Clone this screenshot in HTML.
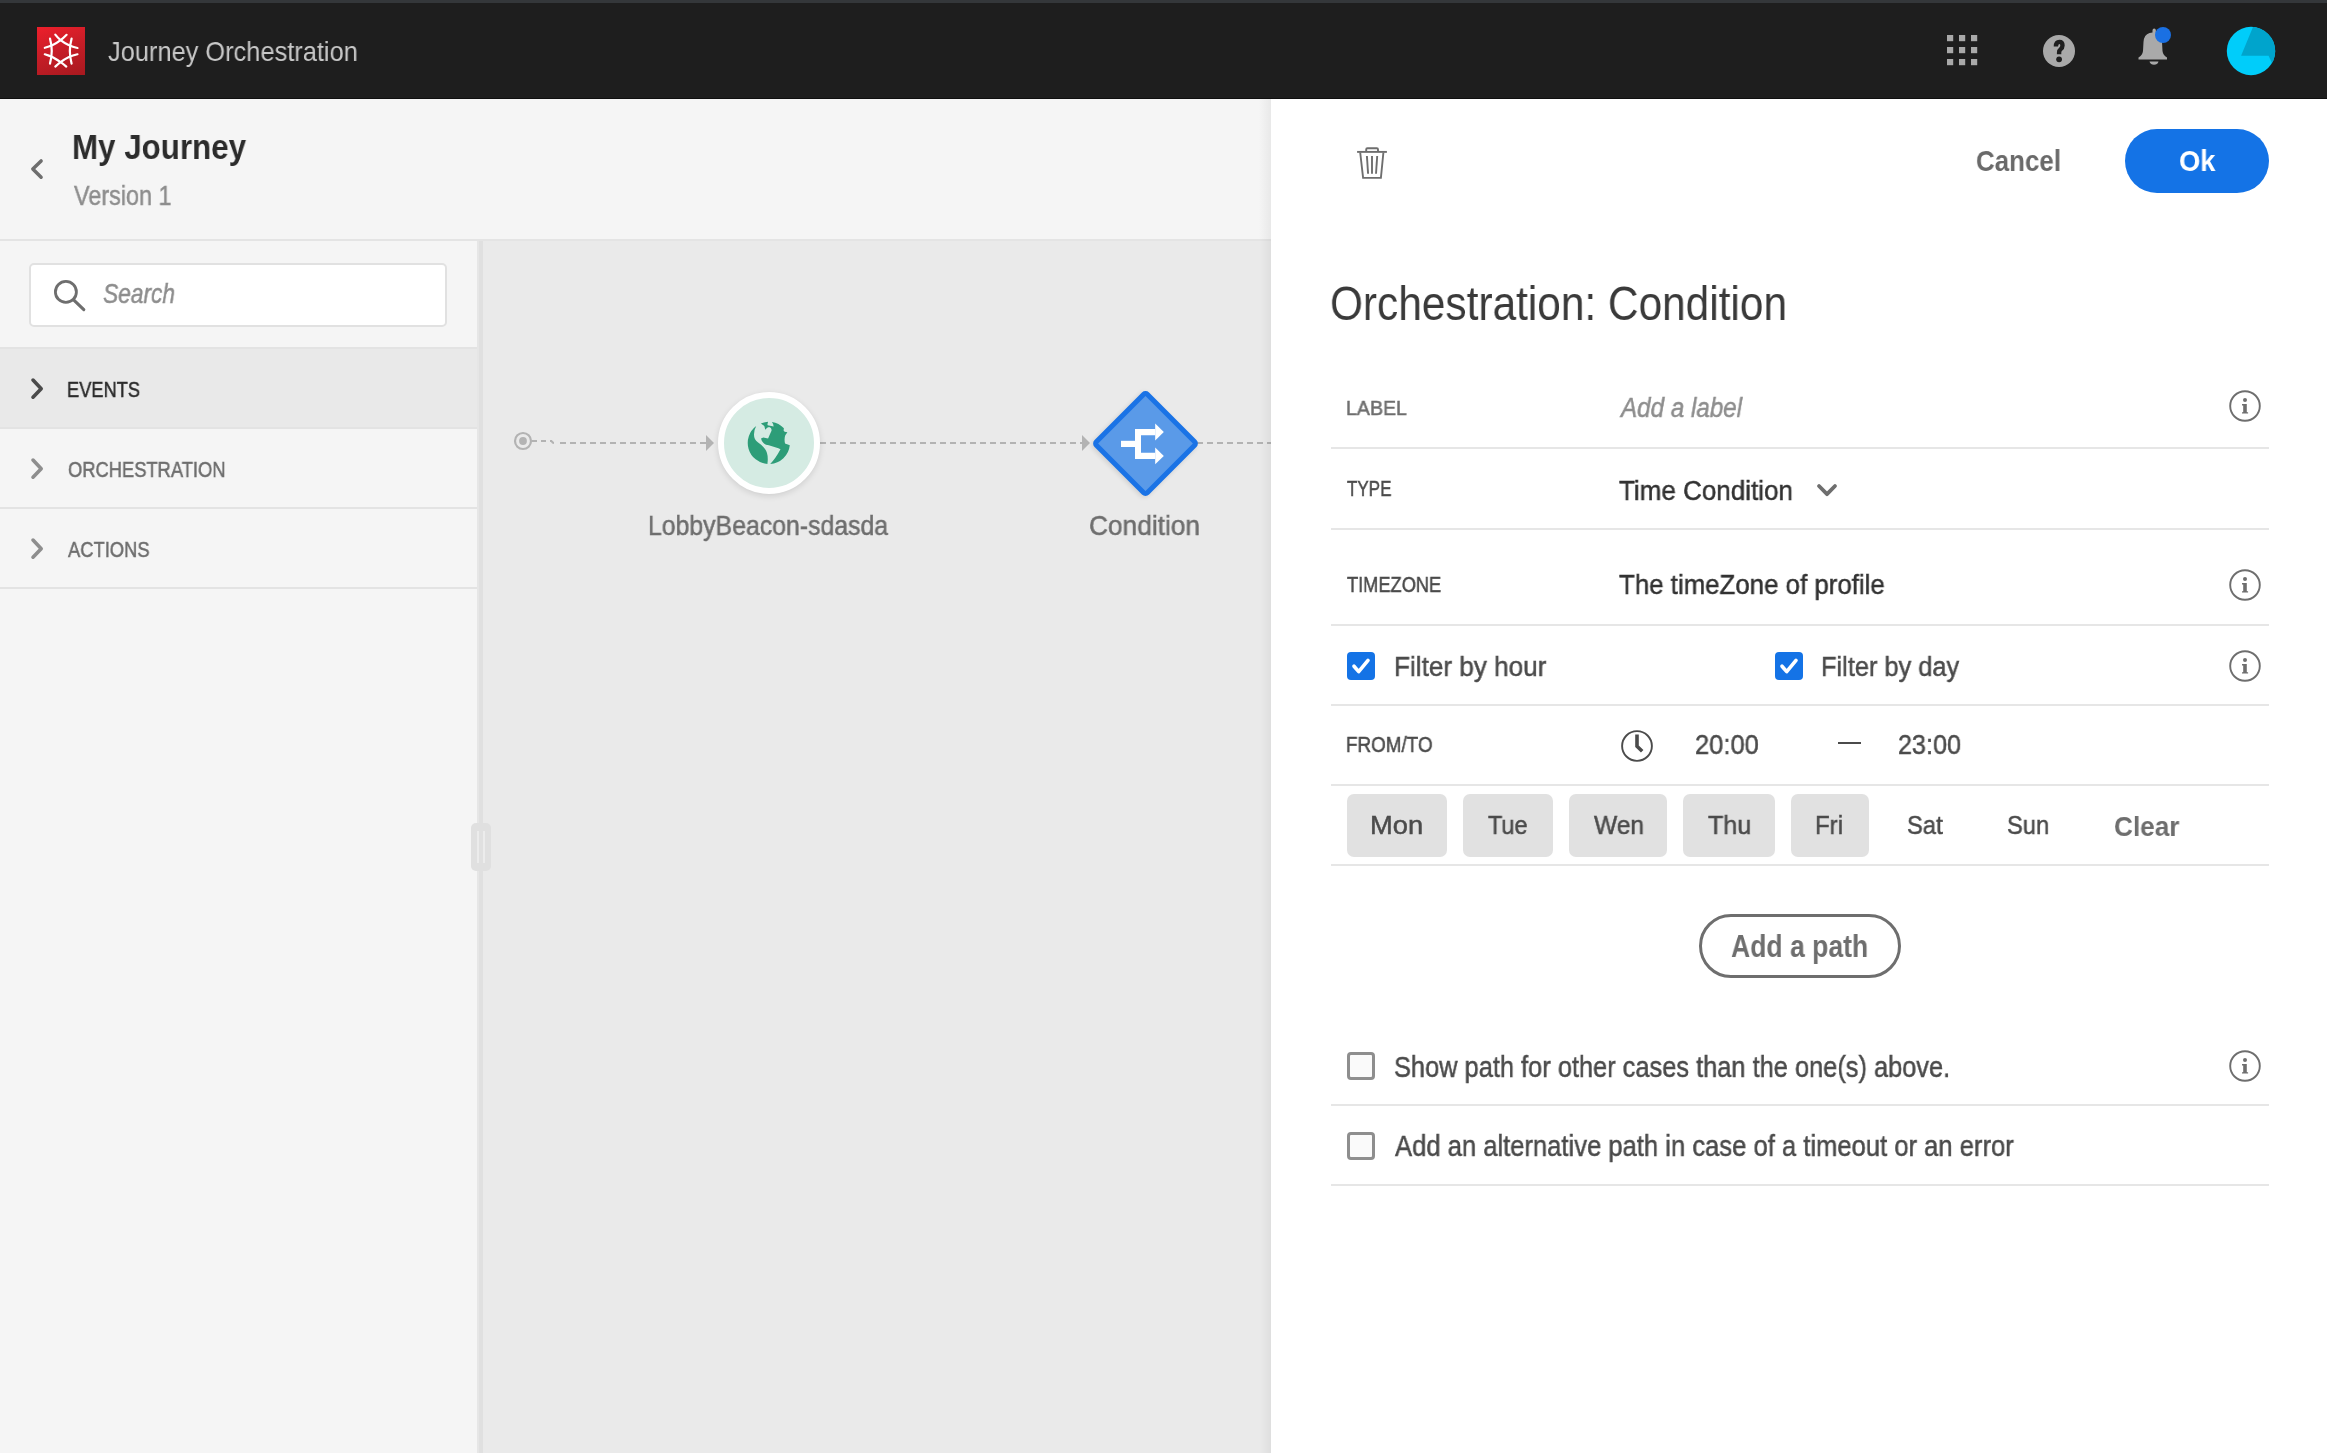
<!DOCTYPE html>
<html><head><meta charset="utf-8"><title>Journey Orchestration</title>
<style>
html,body{margin:0;padding:0;}
body{width:2327px;height:1453px;overflow:hidden;position:relative;background:#fff;font-family:"Liberation Sans",sans-serif;}
.a{position:absolute;}
.t{position:absolute;white-space:nowrap;font-family:"Liberation Sans",sans-serif;will-change:transform;}
#topstrip{left:0;top:0;width:2327px;height:3px;background:#34373a;}
#hdr{left:0;top:3px;width:2327px;height:95px;background:#1e1e1e;}
#hdrline{left:0;top:98px;width:2327px;height:1px;background:#0f0f0f;}
#logo{left:37px;top:27px;width:48px;height:48px;background:linear-gradient(160deg,#ee1f2b 0%,#c51d27 50%,#a8191f 100%);}
#jhead{left:0;top:99px;width:1271px;height:140px;background:#f5f5f5;}
#jline{left:0;top:239px;width:1271px;height:2px;background:#e4e4e4;}
#lpanel{left:0;top:241px;width:477px;height:1212px;background:#f5f5f5;}
#divider{left:477px;top:241px;width:6px;height:1212px;background:#e6e6e6;}
#dividerc{left:479px;top:241px;width:4px;height:1212px;background:#e0e0e0;}
#handle{left:471px;top:823px;width:20px;height:48px;background:#e0e0e0;border-radius:5px;}
#canvas{left:483px;top:241px;width:788px;height:1212px;background:#eaeaea;}
#rshadow{left:1259px;top:99px;width:12px;height:1354px;background:linear-gradient(90deg,rgba(0,0,0,0),rgba(0,0,0,0.05));}
#rpanel{left:1271px;top:99px;width:1056px;height:1354px;background:#ffffff;}
.search{left:29px;top:263px;width:414px;height:60px;background:#fff;border:2px solid #e1e1e1;border-radius:5px;}
.row{left:0;width:477px;}
.hl{height:2px;background:#e6e6e6;}
.daybtn{background:#e1e1e1;border-radius:7px;height:63px;top:794px;}
.cb{width:28px;height:28px;border-radius:4px;box-sizing:border-box;}
.cbon{background:#1473e6;}
.cboff{border:3.5px solid #8e8e8e;background:#fafafa;}

</style></head><body>
<div class="a" id="topstrip"></div>
<div class="a" id="hdr"></div>
<div class="a" id="hdrline"></div>
<div class="a" id="logo">
<svg width="48" height="48" viewBox="0 0 48 48" style="position:absolute;left:0;top:0">
<g fill="none" stroke="#fff" stroke-width="2.2" stroke-linecap="round">
<path d="M18.3 7.6 Q21 11 23.6 13.2 Q31 19 40.5 21"/>
<path d="M29.6 7.8 Q26.5 11 23.6 13.2 Q16 19 7.8 20.8"/>
<path d="M18.3 39.6 Q21 37 23.6 35.1 Q31 29.5 40.5 27.3"/>
<path d="M29.3 39.6 Q26.5 37 23.6 35.1 Q16 29.5 7.8 27.3"/>
<path d="M13 11.6 Q16.5 24 13 36.6"/>
<path d="M34.6 11.6 Q31.1 24 34.6 36.6"/>
</g>
</svg>
</div>
<!-- header right icons -->
<svg class="a" style="left:1940px;top:28px" width="44" height="44" viewBox="0 0 44 44">
<g fill="#a9a9a9">
<rect x="7" y="7" width="6.2" height="6.2"/><rect x="19" y="7" width="6.2" height="6.2"/><rect x="31" y="7" width="6.2" height="6.2"/>
<rect x="7" y="19" width="6.2" height="6.2"/><rect x="19" y="19" width="6.2" height="6.2"/><rect x="31" y="19" width="6.2" height="6.2"/>
<rect x="7" y="31" width="6.2" height="6.2"/><rect x="19" y="31" width="6.2" height="6.2"/><rect x="31" y="31" width="6.2" height="6.2"/>
</g>
</svg>
<svg class="a" style="left:2039px;top:31px" width="40" height="40" viewBox="0 0 40 40">
<circle cx="20" cy="20" r="16" fill="#a9a9a9"/>
<path d="M16.9 15.6 Q16.9 10.9 20.4 10.9 Q23.5 10.9 23.5 14.6 Q23.5 16.9 21.6 18.2 Q20.1 19.2 20.1 21.8 L20.1 23.2" fill="none" stroke="#1e1e1e" stroke-width="4.4" stroke-linecap="butt"/>
<circle cx="20.1" cy="28.3" r="2.9" fill="#1e1e1e"/>
</svg>
<svg class="a" style="left:2133px;top:22px" width="48" height="48" viewBox="0 0 48 48">
<path d="M19.5 8.5 Q19.5 6.5 21.2 6.5 Q22.9 6.5 22.9 8.5 L22.9 11 Q28.5 12.5 29 20 L29.5 29 Q30 33 34 35.5 L34 37.5 L5.5 37.5 L5.5 35.5 Q9.5 33 10 29 L10.5 20 Q11 12.5 16.5 11 L19.5 10.5 Z" fill="#a9a9a9"/>
<path d="M16.5 39.5 L25.5 39.5 Q24.5 42.8 21 42.8 Q17.5 42.8 16.5 39.5 Z" fill="#a9a9a9"/>
<circle cx="30" cy="13" r="8" fill="#1a70e3"/>
</svg>
<svg class="a" style="left:2225px;top:25px" width="52" height="52" viewBox="0 0 52 52">
<defs><clipPath id="avc"><circle cx="26" cy="26" r="24.2"/></clipPath></defs>
<circle cx="26" cy="26" r="24.2" fill="#00cdfa"/>
<path clip-path="url(#avc)" d="M28.8 0 L16.1 30.7 L43.6 30.7 L52.3 50 L60 50 L60 0 Z" fill="#00a4cc"/>
</svg>

<!-- journey header -->
<div class="a" id="jhead"></div>
<div class="a" id="jline"></div>
<svg class="a" style="left:26px;top:155px" width="24" height="28" viewBox="0 0 24 28">
<path d="M15.1 5.9 L6.8 13.9 L15.1 22.2" fill="none" stroke="#6e6e6e" stroke-width="3.5" stroke-linecap="round" stroke-linejoin="round"/>
</svg>

<!-- left panel -->
<div class="a" id="lpanel"></div>
<div class="a search"></div>
<svg class="a" style="left:50px;top:276px" width="40" height="40" viewBox="0 0 40 40">
<circle cx="15.9" cy="15.9" r="10.5" fill="none" stroke="#6e6e6e" stroke-width="2.8"/>
<path d="M23.6 23.8 L33.8 33.6" stroke="#6e6e6e" stroke-width="3.1" stroke-linecap="round"/>
</svg>
<div class="a row hl" style="top:347px;background:#e3e3e3"></div>
<div class="a row" style="top:349px;height:78px;background:#e9e9e9"></div>
<div class="a row hl" style="top:427px;background:#e3e3e3"></div>
<div class="a row hl" style="top:507px;background:#e3e3e3"></div>
<div class="a row hl" style="top:587px;background:#e3e3e3"></div>
<svg class="a" style="left:26px;top:374px" width="24" height="30" viewBox="0 0 24 30">
<path d="M7 6.1 L15.2 14.7 L7 23.2" fill="none" stroke="#4b4b4b" stroke-width="3.6" stroke-linecap="round" stroke-linejoin="round"/>
</svg>
<svg class="a" style="left:26px;top:454px" width="24" height="30" viewBox="0 0 24 30">
<path d="M7 6.1 L15.2 14.7 L7 23.2" fill="none" stroke="#8e8e8e" stroke-width="3.6" stroke-linecap="round" stroke-linejoin="round"/>
</svg>
<svg class="a" style="left:26px;top:534px" width="24" height="30" viewBox="0 0 24 30">
<path d="M7 6.1 L15.2 14.7 L7 23.2" fill="none" stroke="#8e8e8e" stroke-width="3.6" stroke-linecap="round" stroke-linejoin="round"/>
</svg>
<div class="a" id="divider"></div>
<div class="a" id="dividerc"></div>

<!-- canvas -->
<div class="a" id="canvas"></div>
<div class="a" id="handle"></div>
<div class="a" style="left:477px;top:831px;width:2px;height:32px;background:#ececec"></div>
<div class="a" style="left:483px;top:831px;width:2px;height:32px;background:#ececec"></div>
<svg class="a" style="left:483px;top:380px" width="788" height="130" viewBox="483 380 788 130">
<circle cx="523" cy="441" r="8" fill="none" stroke="#b3b3b3" stroke-width="2.2"/>
<circle cx="523" cy="441" r="3.9" fill="#b3b3b3"/>
<path d="M532 441 L552 441" stroke="#b3b3b3" stroke-width="2" stroke-dasharray="5 4"/>
<path d="M551.5 441 Q552.5 443 554 443" fill="none" stroke="#b3b3b3" stroke-width="2"/>
<path d="M560 443 L706 443" stroke="#b3b3b3" stroke-width="2" stroke-dasharray="6 4"/>
<path d="M706 435 L714 443 L706 451 Z" fill="#b3b3b3"/>
<path d="M820 443 L1082 443" stroke="#b3b3b3" stroke-width="2" stroke-dasharray="6 4"/>
<path d="M1082 435 L1090 443 L1082 451 Z" fill="#b3b3b3"/>
<path d="M1197 443 L1271 443" stroke="#b3b3b3" stroke-width="2" stroke-dasharray="6 4"/>
</svg>
<div class="a" style="left:718px;top:392px;width:90px;height:90px;border:6px solid #fff;border-radius:50%;background:#d5ebe3;box-shadow:0 2px 6px rgba(0,0,0,0.12)"></div>
<svg class="a" style="left:744px;top:418px" width="50" height="50" viewBox="0 0 50 50">
<path fill="#2d9d78" d="M12.2 8.1 A21 21 0 0 0 23.4 45.9 Q24.8 36 21 31 Q18 27 13.8 24.2 Q9.8 21.5 10 16.2 Q10.3 11.5 12.2 8.1 Z"/>
<path fill="#2d9d78" d="M17 20.6 L19.3 19.6 L24.1 20.6 Q25.5 17 27.5 12.7 Q28 9.6 25.1 9.1 Q23 9.2 21.3 11.7 L20.3 7.9 L16.9 5.5 Q20.5 4 24.1 3.8 L23.4 6.2 L23.7 7.2 L29.6 8.4 L29.2 6.2 L27.9 4.1 A21 21 0 0 1 39.9 10.3 L39.6 12.4 L40.6 13.8 L43.4 14.3 L41.3 17.2 Q40 20.5 41 25.5 L45.8 27.2 A21 21 0 0 1 26.2 45.9 Q31 41.5 36.5 31.3 L34.4 30.3 L24.8 27.2 L22 26.8 Q20 26 19.3 24.8 Q17.5 23 17 20.6 Z"/>
</svg>
<div class="a" style="left:1106.5px;top:404.5px;width:77px;height:77px;box-sizing:border-box;background:#5a9ae8;border:5.5px solid #1a73e6;border-radius:5px;transform:rotate(45deg);box-shadow:0 2px 5px rgba(0,0,0,0.12)"></div>
<svg class="a" style="left:1115px;top:418px" width="56" height="50" viewBox="1115 418 56 50">
<g fill="#fff">
<rect x="1121" y="440.8" width="15" height="6.2"/>
<path d="M1135 429 L1155.2 429 L1155.2 435.2 L1141 435.2 L1141 452.8 L1155.2 452.8 L1155.2 459 L1135 459 Z"/>
<path d="M1155.2 423.6 L1163.8 432 L1155.2 440.4 Z"/>
<path d="M1155.2 447.5 L1163.8 455.9 L1155.2 464.3 Z"/>
</g>
</svg>

<!-- right panel -->
<div class="a" id="rshadow"></div>
<div class="a" id="rpanel"></div>
<svg class="a" style="left:1352px;top:142px" width="40" height="42" viewBox="0 0 40 42">
<g fill="none" stroke="#6e6e6e" stroke-width="1.9">
<path d="M5.1 9.9 L34.9 9.9"/>
<path d="M14.2 9.9 L14.2 7.4 Q14.2 6.2 15.4 6.2 L24.8 6.2 Q26 6.2 26 7.4 L26 9.9"/>
<path d="M8.2 10.5 L11.1 35.9 L28.9 35.9 L31.4 10.5"/>
<path d="M14.9 14 L16.1 31.8"/><path d="M20 14 L20 31.8"/><path d="M25.2 14 L24 31.8"/>
</g>
</svg>
<div class="a" style="left:2125px;top:129px;width:144px;height:64px;border-radius:32px;background:#1473e6"></div>

<div class="a hl" style="left:1331px;top:447px;width:938px"></div>
<div class="a hl" style="left:1331px;top:528px;width:938px"></div>
<div class="a hl" style="left:1331px;top:624px;width:938px"></div>
<div class="a hl" style="left:1331px;top:704px;width:938px"></div>
<div class="a hl" style="left:1331px;top:784px;width:938px"></div>
<div class="a hl" style="left:1331px;top:864px;width:938px"></div>
<div class="a hl" style="left:1331px;top:1104px;width:938px"></div>
<div class="a hl" style="left:1331px;top:1184px;width:938px"></div>

<svg class="a" style="left:2225px;top:386px" width="40" height="40" viewBox="0 0 40 40">
<circle cx="20" cy="20" r="14.8" fill="none" stroke="#6e6e6e" stroke-width="1.9"/>
<circle cx="20" cy="14" r="2" fill="#6e6e6e"/>
<path d="M17 18.1 L21.8 18.1 L21.8 26.2 L23.1 26.2 L23.1 27.6 L17 27.6 L17 26.2 L18.2 26.2 L18.2 19.5 L17 19.5 Z" fill="#6e6e6e"/>
</svg>
<svg class="a" style="left:2225px;top:565px" width="40" height="40" viewBox="0 0 40 40">
<circle cx="20" cy="20" r="14.8" fill="none" stroke="#6e6e6e" stroke-width="1.9"/>
<circle cx="20" cy="14" r="2" fill="#6e6e6e"/>
<path d="M17 18.1 L21.8 18.1 L21.8 26.2 L23.1 26.2 L23.1 27.6 L17 27.6 L17 26.2 L18.2 26.2 L18.2 19.5 L17 19.5 Z" fill="#6e6e6e"/>
</svg>
<svg class="a" style="left:2225px;top:646px" width="40" height="40" viewBox="0 0 40 40">
<circle cx="20" cy="20" r="14.8" fill="none" stroke="#6e6e6e" stroke-width="1.9"/>
<circle cx="20" cy="14" r="2" fill="#6e6e6e"/>
<path d="M17 18.1 L21.8 18.1 L21.8 26.2 L23.1 26.2 L23.1 27.6 L17 27.6 L17 26.2 L18.2 26.2 L18.2 19.5 L17 19.5 Z" fill="#6e6e6e"/>
</svg>
<svg class="a" style="left:2225px;top:1046px" width="40" height="40" viewBox="0 0 40 40">
<circle cx="20" cy="20" r="14.8" fill="none" stroke="#6e6e6e" stroke-width="1.9"/>
<circle cx="20" cy="14" r="2" fill="#6e6e6e"/>
<path d="M17 18.1 L21.8 18.1 L21.8 26.2 L23.1 26.2 L23.1 27.6 L17 27.6 L17 26.2 L18.2 26.2 L18.2 19.5 L17 19.5 Z" fill="#6e6e6e"/>
</svg>

<svg class="a" style="left:1812px;top:478px" width="30" height="24" viewBox="0 0 30 24">
<path d="M7 8 L15 16.2 L23 8" fill="none" stroke="#6e6e6e" stroke-width="3.8" stroke-linecap="round" stroke-linejoin="round"/>
</svg>

<div class="a cb cbon" style="left:1347px;top:652px"></div>
<svg class="a" style="left:1347px;top:652px" width="28" height="28" viewBox="0 0 28 28">
<path d="M7 14.2 L11.7 19.6 L21 8.3" fill="none" stroke="#fff" stroke-width="3.6" stroke-linecap="round" stroke-linejoin="round"/>
</svg>
<div class="a cb cbon" style="left:1775px;top:652px"></div>
<svg class="a" style="left:1775px;top:652px" width="28" height="28" viewBox="0 0 28 28">
<path d="M7 14.2 L11.7 19.6 L21 8.3" fill="none" stroke="#fff" stroke-width="3.6" stroke-linecap="round" stroke-linejoin="round"/>
</svg>

<svg class="a" style="left:1617px;top:726px" width="40" height="40" viewBox="0 0 40 40">
<circle cx="20" cy="20" r="14.9" fill="none" stroke="#4b4b4b" stroke-width="1.9"/>
<path d="M20 8.4 L20 20.2 L25.2 25.2" fill="none" stroke="#4b4b4b" stroke-width="3.6" stroke-linejoin="miter"/>
</svg>
<div class="a" style="left:1838px;top:742px;width:23px;height:2px;background:#4b4b4b"></div>

<div class="a daybtn" style="left:1347px;width:100px"></div>
<div class="a daybtn" style="left:1463px;width:90px"></div>
<div class="a daybtn" style="left:1569px;width:98px"></div>
<div class="a daybtn" style="left:1683px;width:92px"></div>
<div class="a daybtn" style="left:1791px;width:78px"></div>

<div class="a" style="left:1699px;top:914px;width:202px;height:64px;box-sizing:border-box;border:3.5px solid #6e6e6e;border-radius:32px"></div>

<div class="a cb cboff" style="left:1347px;top:1052px"></div>
<div class="a cb cboff" style="left:1347px;top:1132px"></div>

<div class="t" style="left:108.20px;top:33.00px;font-size:27.47px;line-height:37px;font-weight:400;font-style:normal;color:#c8c8c8;transform:scaleX(0.9243);transform-origin:0 0;">Journey Orchestration</div>
<div class="t" style="left:71.50px;top:124.00px;font-size:34.88px;line-height:45px;font-weight:700;font-style:normal;color:#2c2c2c;transform:scaleX(0.8979);transform-origin:0 0;">My Journey</div>
<div class="t" style="left:73.50px;top:177.00px;font-size:27.33px;line-height:37px;font-weight:400;font-style:normal;color:#8e8e8e;transform:scaleX(0.8557);transform-origin:0 0;-webkit-text-stroke:0.5px #8e8e8e;">Version 1</div>
<div class="t" style="left:103.00px;top:275.00px;font-size:28.05px;line-height:37px;font-weight:400;font-style:italic;color:#8e8e8e;transform:scaleX(0.8101);transform-origin:0 0;-webkit-text-stroke:0.5px #8e8e8e;">Search</div>
<div class="t" style="left:66.50px;top:375.00px;font-size:21.22px;line-height:29px;font-weight:400;font-style:normal;color:#2c2c2c;transform:scaleX(0.8599);transform-origin:0 0;-webkit-text-stroke:0.5px #2c2c2c;">EVENTS</div>
<div class="t" style="left:67.50px;top:456.00px;font-size:21.51px;line-height:28px;font-weight:400;font-style:normal;color:#6e6e6e;transform:scaleX(0.8525);transform-origin:0 0;-webkit-text-stroke:0.5px #6e6e6e;">ORCHESTRATION</div>
<div class="t" style="left:67.50px;top:535.00px;font-size:22.09px;line-height:29px;font-weight:400;font-style:normal;color:#6e6e6e;transform:scaleX(0.8305);transform-origin:0 0;-webkit-text-stroke:0.5px #6e6e6e;">ACTIONS</div>
<div class="t" style="left:647.50px;top:507.00px;font-size:27.47px;line-height:37px;font-weight:400;font-style:normal;color:#6e6e6e;transform:scaleX(0.9032);transform-origin:0 0;-webkit-text-stroke:0.5px #6e6e6e;">LobbyBeacon-sdasda</div>
<div class="t" style="left:1089.00px;top:507.00px;font-size:27.47px;line-height:37px;font-weight:400;font-style:normal;color:#6e6e6e;transform:scaleX(0.9567);transform-origin:0 0;-webkit-text-stroke:0.5px #6e6e6e;">Condition</div>
<div class="t" style="left:1976.00px;top:141.00px;font-size:29.80px;line-height:39px;font-weight:700;font-style:normal;color:#6a6a6a;transform:scaleX(0.8703);transform-origin:0 0;">Cancel</div>
<div class="t" style="left:2179.00px;top:142.00px;font-size:29.07px;line-height:38px;font-weight:700;font-style:normal;color:#ffffff;transform:scaleX(0.9417);transform-origin:0 0;">Ok</div>
<div class="t" style="left:1330.20px;top:271.00px;font-size:48.69px;line-height:64px;font-weight:400;font-style:normal;color:#3a3a3a;transform:scaleX(0.8705);transform-origin:0 0;">Orchestration: Condition</div>
<div class="t" style="left:1346.20px;top:395.00px;font-size:20.35px;line-height:26px;font-weight:400;font-style:normal;color:#6e6e6e;transform:scaleX(0.9618);transform-origin:0 0;-webkit-text-stroke:0.5px #6e6e6e;">LABEL</div>
<div class="t" style="left:1621.00px;top:388.00px;font-size:28.20px;line-height:38px;font-weight:400;font-style:italic;color:#8e8e8e;transform:scaleX(0.8583);transform-origin:0 0;-webkit-text-stroke:0.5px #8e8e8e;">Add a label</div>
<div class="t" style="left:1347.00px;top:474.00px;font-size:21.80px;line-height:29px;font-weight:400;font-style:normal;color:#4b4b4b;transform:scaleX(0.7798);transform-origin:0 0;-webkit-text-stroke:0.5px #4b4b4b;">TYPE</div>
<div class="t" style="left:1619.00px;top:472.00px;font-size:27.62px;line-height:37px;font-weight:400;font-style:normal;color:#323232;transform:scaleX(0.9418);transform-origin:0 0;-webkit-text-stroke:0.5px #323232;">Time Condition</div>
<div class="t" style="left:1347.00px;top:570.00px;font-size:21.80px;line-height:29px;font-weight:400;font-style:normal;color:#4b4b4b;transform:scaleX(0.8364);transform-origin:0 0;-webkit-text-stroke:0.5px #4b4b4b;">TIMEZONE</div>
<div class="t" style="left:1619.00px;top:566.00px;font-size:28.05px;line-height:37px;font-weight:400;font-style:normal;color:#323232;transform:scaleX(0.9216);transform-origin:0 0;-webkit-text-stroke:0.5px #323232;">The timeZone of profile</div>
<div class="t" style="left:1394.00px;top:647.00px;font-size:28.34px;line-height:38px;font-weight:400;font-style:normal;color:#4b4b4b;transform:scaleX(0.9226);transform-origin:0 0;-webkit-text-stroke:0.5px #4b4b4b;">Filter by hour</div>
<div class="t" style="left:1820.80px;top:647.00px;font-size:28.34px;line-height:38px;font-weight:400;font-style:normal;color:#4b4b4b;transform:scaleX(0.8964);transform-origin:0 0;-webkit-text-stroke:0.5px #4b4b4b;">Filter by day</div>
<div class="t" style="left:1346.00px;top:730.00px;font-size:21.22px;line-height:29px;font-weight:400;font-style:normal;color:#4b4b4b;transform:scaleX(0.8878);transform-origin:0 0;-webkit-text-stroke:0.5px #4b4b4b;">FROM/TO</div>
<div class="t" style="left:1695.20px;top:727.00px;font-size:26.74px;line-height:36px;font-weight:400;font-style:normal;color:#4b4b4b;transform:scaleX(0.9541);transform-origin:0 0;-webkit-text-stroke:0.5px #4b4b4b;">20:00</div>
<div class="t" style="left:1898.00px;top:727.00px;font-size:26.74px;line-height:36px;font-weight:400;font-style:normal;color:#4b4b4b;transform:scaleX(0.9419);transform-origin:0 0;-webkit-text-stroke:0.5px #4b4b4b;">23:00</div>
<div class="t" style="left:1370.00px;top:808.00px;font-size:25.87px;line-height:34px;font-weight:400;font-style:normal;color:#4b4b4b;transform:scaleX(1.0553);transform-origin:0 0;-webkit-text-stroke:0.5px #4b4b4b;">Mon</div>
<div class="t" style="left:1488.00px;top:808.00px;font-size:25.87px;line-height:34px;font-weight:400;font-style:normal;color:#4b4b4b;transform:scaleX(0.9059);transform-origin:0 0;-webkit-text-stroke:0.5px #4b4b4b;">Tue</div>
<div class="t" style="left:1593.60px;top:808.00px;font-size:25.87px;line-height:34px;font-weight:400;font-style:normal;color:#4b4b4b;transform:scaleX(0.9505);transform-origin:0 0;-webkit-text-stroke:0.5px #4b4b4b;">Wen</div>
<div class="t" style="left:1708.00px;top:808.00px;font-size:25.87px;line-height:34px;font-weight:400;font-style:normal;color:#4b4b4b;transform:scaleX(0.9702);transform-origin:0 0;-webkit-text-stroke:0.5px #4b4b4b;">Thu</div>
<div class="t" style="left:1815.40px;top:808.00px;font-size:25.87px;line-height:34px;font-weight:400;font-style:normal;color:#4b4b4b;transform:scaleX(0.9281);transform-origin:0 0;-webkit-text-stroke:0.5px #4b4b4b;">Fri</div>
<div class="t" style="left:1907.40px;top:808.00px;font-size:25.87px;line-height:34px;font-weight:400;font-style:normal;color:#4b4b4b;transform:scaleX(0.9149);transform-origin:0 0;-webkit-text-stroke:0.5px #4b4b4b;">Sat</div>
<div class="t" style="left:2007.00px;top:808.00px;font-size:25.87px;line-height:34px;font-weight:400;font-style:normal;color:#4b4b4b;transform:scaleX(0.9144);transform-origin:0 0;-webkit-text-stroke:0.5px #4b4b4b;">Sun</div>
<div class="t" style="left:2113.50px;top:808.00px;font-size:27.62px;line-height:37px;font-weight:700;font-style:normal;color:#6e6e6e;transform:scaleX(0.9484);transform-origin:0 0;">Clear</div>
<div class="t" style="left:1731.00px;top:926.00px;font-size:30.81px;line-height:41px;font-weight:700;font-style:normal;color:#6e6e6e;transform:scaleX(0.8624);transform-origin:0 0;">Add a path</div>
<div class="t" style="left:1393.70px;top:1047.00px;font-size:29.80px;line-height:39px;font-weight:400;font-style:normal;color:#4b4b4b;transform:scaleX(0.8523);transform-origin:0 0;-webkit-text-stroke:0.5px #4b4b4b;">Show path for other cases than the one(s) above.</div>
<div class="t" style="left:1394.70px;top:1127.00px;font-size:28.78px;line-height:38px;font-weight:400;font-style:normal;color:#4b4b4b;transform:scaleX(0.8896);transform-origin:0 0;-webkit-text-stroke:0.5px #4b4b4b;">Add an alternative path in case of a timeout or an error</div>
</body></html>
